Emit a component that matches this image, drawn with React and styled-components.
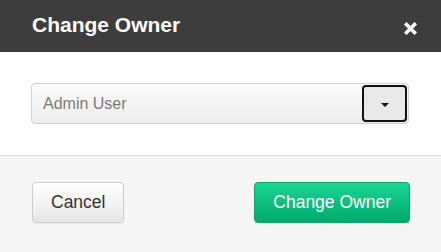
import React, { useState } from 'react'
import styled, { createGlobalStyle } from 'styled-components'

const GlobalStyle = createGlobalStyle`
    html, body {
        margin: 0;
        padding: 0;
        background: #ffffff;
        font-family: "Liberation Sans", Arial, sans-serif;
    }
`;

const Modal = styled.div`
    width: 441px;
    height: 252px;
    display: flex;
    flex-direction: column;
    overflow: hidden;
`;

const Header = styled.div`
    height: 52px;
    flex-shrink: 0;
    background-color: #3d3d3d;
    display: flex;
    align-items: center;
    justify-content: space-between;
    padding: 0 24px 0 32px;
`;

const Title = styled.h4`
    margin: 0;
    color: #ffffff;
    font-size: 21px;
    font-weight: bold;
    line-height: 1;
    margin-top: -3px;
`;

const CloseButton = styled.button`
    border: none;
    background: none;
    padding: 0;
    width: 13px;
    height: 13px;
    margin-top: 4px;
    cursor: pointer;
    display: flex;
`;

const Body = styled.div`
    height: 104px;
    flex-shrink: 0;
    background: #ffffff;
    padding: 31px 32px 0 31px;
    box-sizing: border-box;
    border-bottom: 1px solid #d9d9d9;
`;

const Select = styled.div`
    height: 41px;
    box-sizing: border-box;
    border: 1px solid #cfcfcf;
    border-radius: 4px;
    background: linear-gradient(to bottom, #fbfbfb, #ececec);
    display: flex;
    align-items: center;
    padding: 0 1px 0 11px;
`;

const SelectText = styled.span`
    flex: 1;
    color: #7a7a7a;
    font-size: 16px;
`;

const CaretButton = styled.button`
    width: 45px;
    height: 37px;
    box-sizing: border-box;
    border: 2px solid #111111;
    border-radius: 4px;
    background: #e8e8e8;
    display: flex;
    align-items: center;
    justify-content: center;
    padding: 0;
    cursor: pointer;
`;

const Caret = styled.span`
    width: 0;
    height: 0;
    border-left: 4.5px solid transparent;
    border-right: 4.5px solid transparent;
    border-top: 4.5px solid #111111;
    margin-top: 3px;
`;

const Footer = styled.div`
    flex: 1;
    background: #f5f5f5;
    display: flex;
    justify-content: space-between;
    align-items: flex-start;
    padding: 26px 31px 0 32px;
`;

const Button = styled.button`
    height: 41px;
    box-sizing: border-box;
    padding: 0 18px;
    border-radius: 4px;
    font-family: "Liberation Sans", Arial, sans-serif;
    font-size: 17.5px;
    cursor: pointer;
    border: 1px solid ${props => props.$primary ? '#08a86c' : '#cccccc'};
    color: ${props => props.$primary ? '#ffffff' : '#333333'};
    background: ${props => props.$primary
        ? 'linear-gradient(to bottom, #1ad595, #02a96b)'
        : 'linear-gradient(to bottom, #ffffff, #e6e6e6)'};
    box-shadow: ${props => props.$primary ? 'none' : '0 1px 1px rgba(0,0,0,0.05)'};
`;

export default function App() {
    const [owner] = useState('Admin User');

    return (
        <>
            <GlobalStyle />
            <Modal>
                <Header>
                    <Title>Change Owner</Title>
                    <CloseButton aria-label="Close">
                        <svg width="13" height="13" viewBox="0 0 13 13">
                            <path d="M2.5 2.5 L10.5 10.5 M10.5 2.5 L2.5 10.5" stroke="#ffffff" strokeWidth="3.6" strokeLinecap="square" />
                        </svg>
                    </CloseButton>
                </Header>
                <Body>
                    <Select>
                        <SelectText>{owner}</SelectText>
                        <CaretButton>
                            <Caret />
                        </CaretButton>
                    </Select>
                </Body>
                <Footer>
                    <Button>Cancel</Button>
                    <Button $primary>Change Owner</Button>
                </Footer>
            </Modal>
        </>
    )
}
